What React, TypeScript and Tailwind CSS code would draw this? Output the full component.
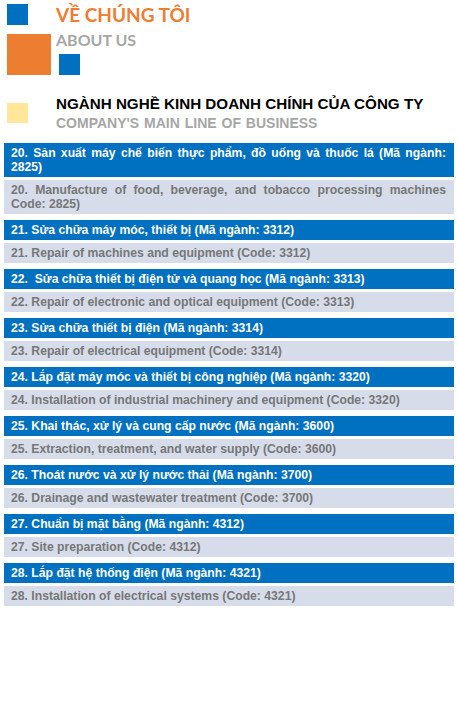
import React from "react";

const rows: { vi: string; en: string }[] = [
  { vi: "20. Sản xuất máy chế biến thực phẩm, đồ uống và thuốc lá (Mã ngành: 2825)", en: "20. Manufacture of food, beverage, and tobacco processing machines Code: 2825)" },
  { vi: "21. Sửa chữa máy móc, thiết bị (Mã ngành: 3312)", en: "21. Repair of machines and equipment (Code: 3312)" },
  { vi: "22.\u00a0 Sửa chữa thiết bị điện tử và quang học (Mã ngành: 3313)", en: "22. Repair of electronic and optical equipment (Code: 3313)" },
  { vi: "23. Sửa chữa thiết bị điện (Mã ngành: 3314)", en: "23. Repair of electrical equipment (Code: 3314)" },
  { vi: "24. Lắp đặt máy móc và thiết bị công nghiệp (Mã ngành: 3320)", en: "24. Installation of industrial machinery and equipment (Code: 3320)" },
  { vi: "25. Khai thác, xử lý và cung cấp nước (Mã ngành: 3600)", en: "25. Extraction, treatment, and water supply (Code: 3600)" },
  { vi: "26. Thoát nước và xử lý nước thải (Mã ngành: 3700)", en: "26. Drainage and wastewater treatment (Code: 3700)" },
  { vi: "27. Chuẩn bị mặt bằng (Mã ngành: 4312)", en: "27. Site preparation (Code: 4312)" },
  { vi: "28. Lắp đặt hệ thống điện (Mã ngành: 4321)", en: "28. Installation of electrical systems (Code: 4321)" },
];

export default function App() {
  return (
    <div className="w-[458px] h-[720px] bg-white overflow-hidden" style={{ fontFamily: '"Liberation Sans", Arial, sans-serif' }}>
      {/* header */}
      <div className="pl-[7px] pt-[4px]">
        <div className="flex items-start">
          <div className="w-[21px] h-[21px] bg-[#0070c0] shrink-0" />
          <div className="ml-[28px] text-[19px] leading-[22px] font-bold text-[#ed7d31]" style={{ fontFamily: 'Lato, "Open Sans", sans-serif' }}>
            VỀ CHÚNG TÔI
          </div>
        </div>
        <div className="flex items-start mt-[8px]">
          <div className="w-[44px] h-[41px] bg-[#ed7d31] shrink-0" />
          <div className="ml-[5px] flex flex-col">
            <div className="-mt-[4px] text-[16px] leading-[19px] font-bold text-[#a6a6a6]" style={{ fontFamily: 'Lato, "Open Sans", sans-serif' }}>
              ABOUT US
            </div>
            <div className="ml-[3px] mt-[5px] w-[21px] h-[21px] bg-[#0070c0]" />
          </div>
        </div>
        <div className="flex items-start mt-[20px]">
          <div className="w-[21px] h-[20px] bg-[#ffe699] mt-[8px] shrink-0" />
          <div className="ml-[28px] flex flex-col">
            <div className="text-[15.2px] leading-[18px] font-bold text-black">NGÀNH NGHỀ KINH DOANH CHÍNH CỦA CÔNG TY</div>
            <div className="mt-[2px] text-[14px] leading-[16px] font-bold text-[#a6a6a6] [word-spacing:1px]">COMPANY'S MAIN LINE OF BUSINESS</div>
          </div>
        </div>
      </div>

      {/* list */}
      <div className="mt-[12px] ml-[4px] w-[450px] flex flex-col gap-[6px]">
        {rows.map((r, i) => (
          <div key={i} className="flex flex-col gap-[3px]">
            <div className="bg-[#0070c0] text-white text-[12.2px] font-bold leading-[14px] pl-[7px] pr-[8px] py-[3px] text-justify">
              {r.vi}
            </div>
            <div className="bg-[#d6dce9] text-[#777777] text-[12.2px] font-bold leading-[14px] pl-[7px] pr-[8px] py-[3px] text-justify">
              {r.en}
            </div>
          </div>
        ))}
      </div>
    </div>
  );
}
